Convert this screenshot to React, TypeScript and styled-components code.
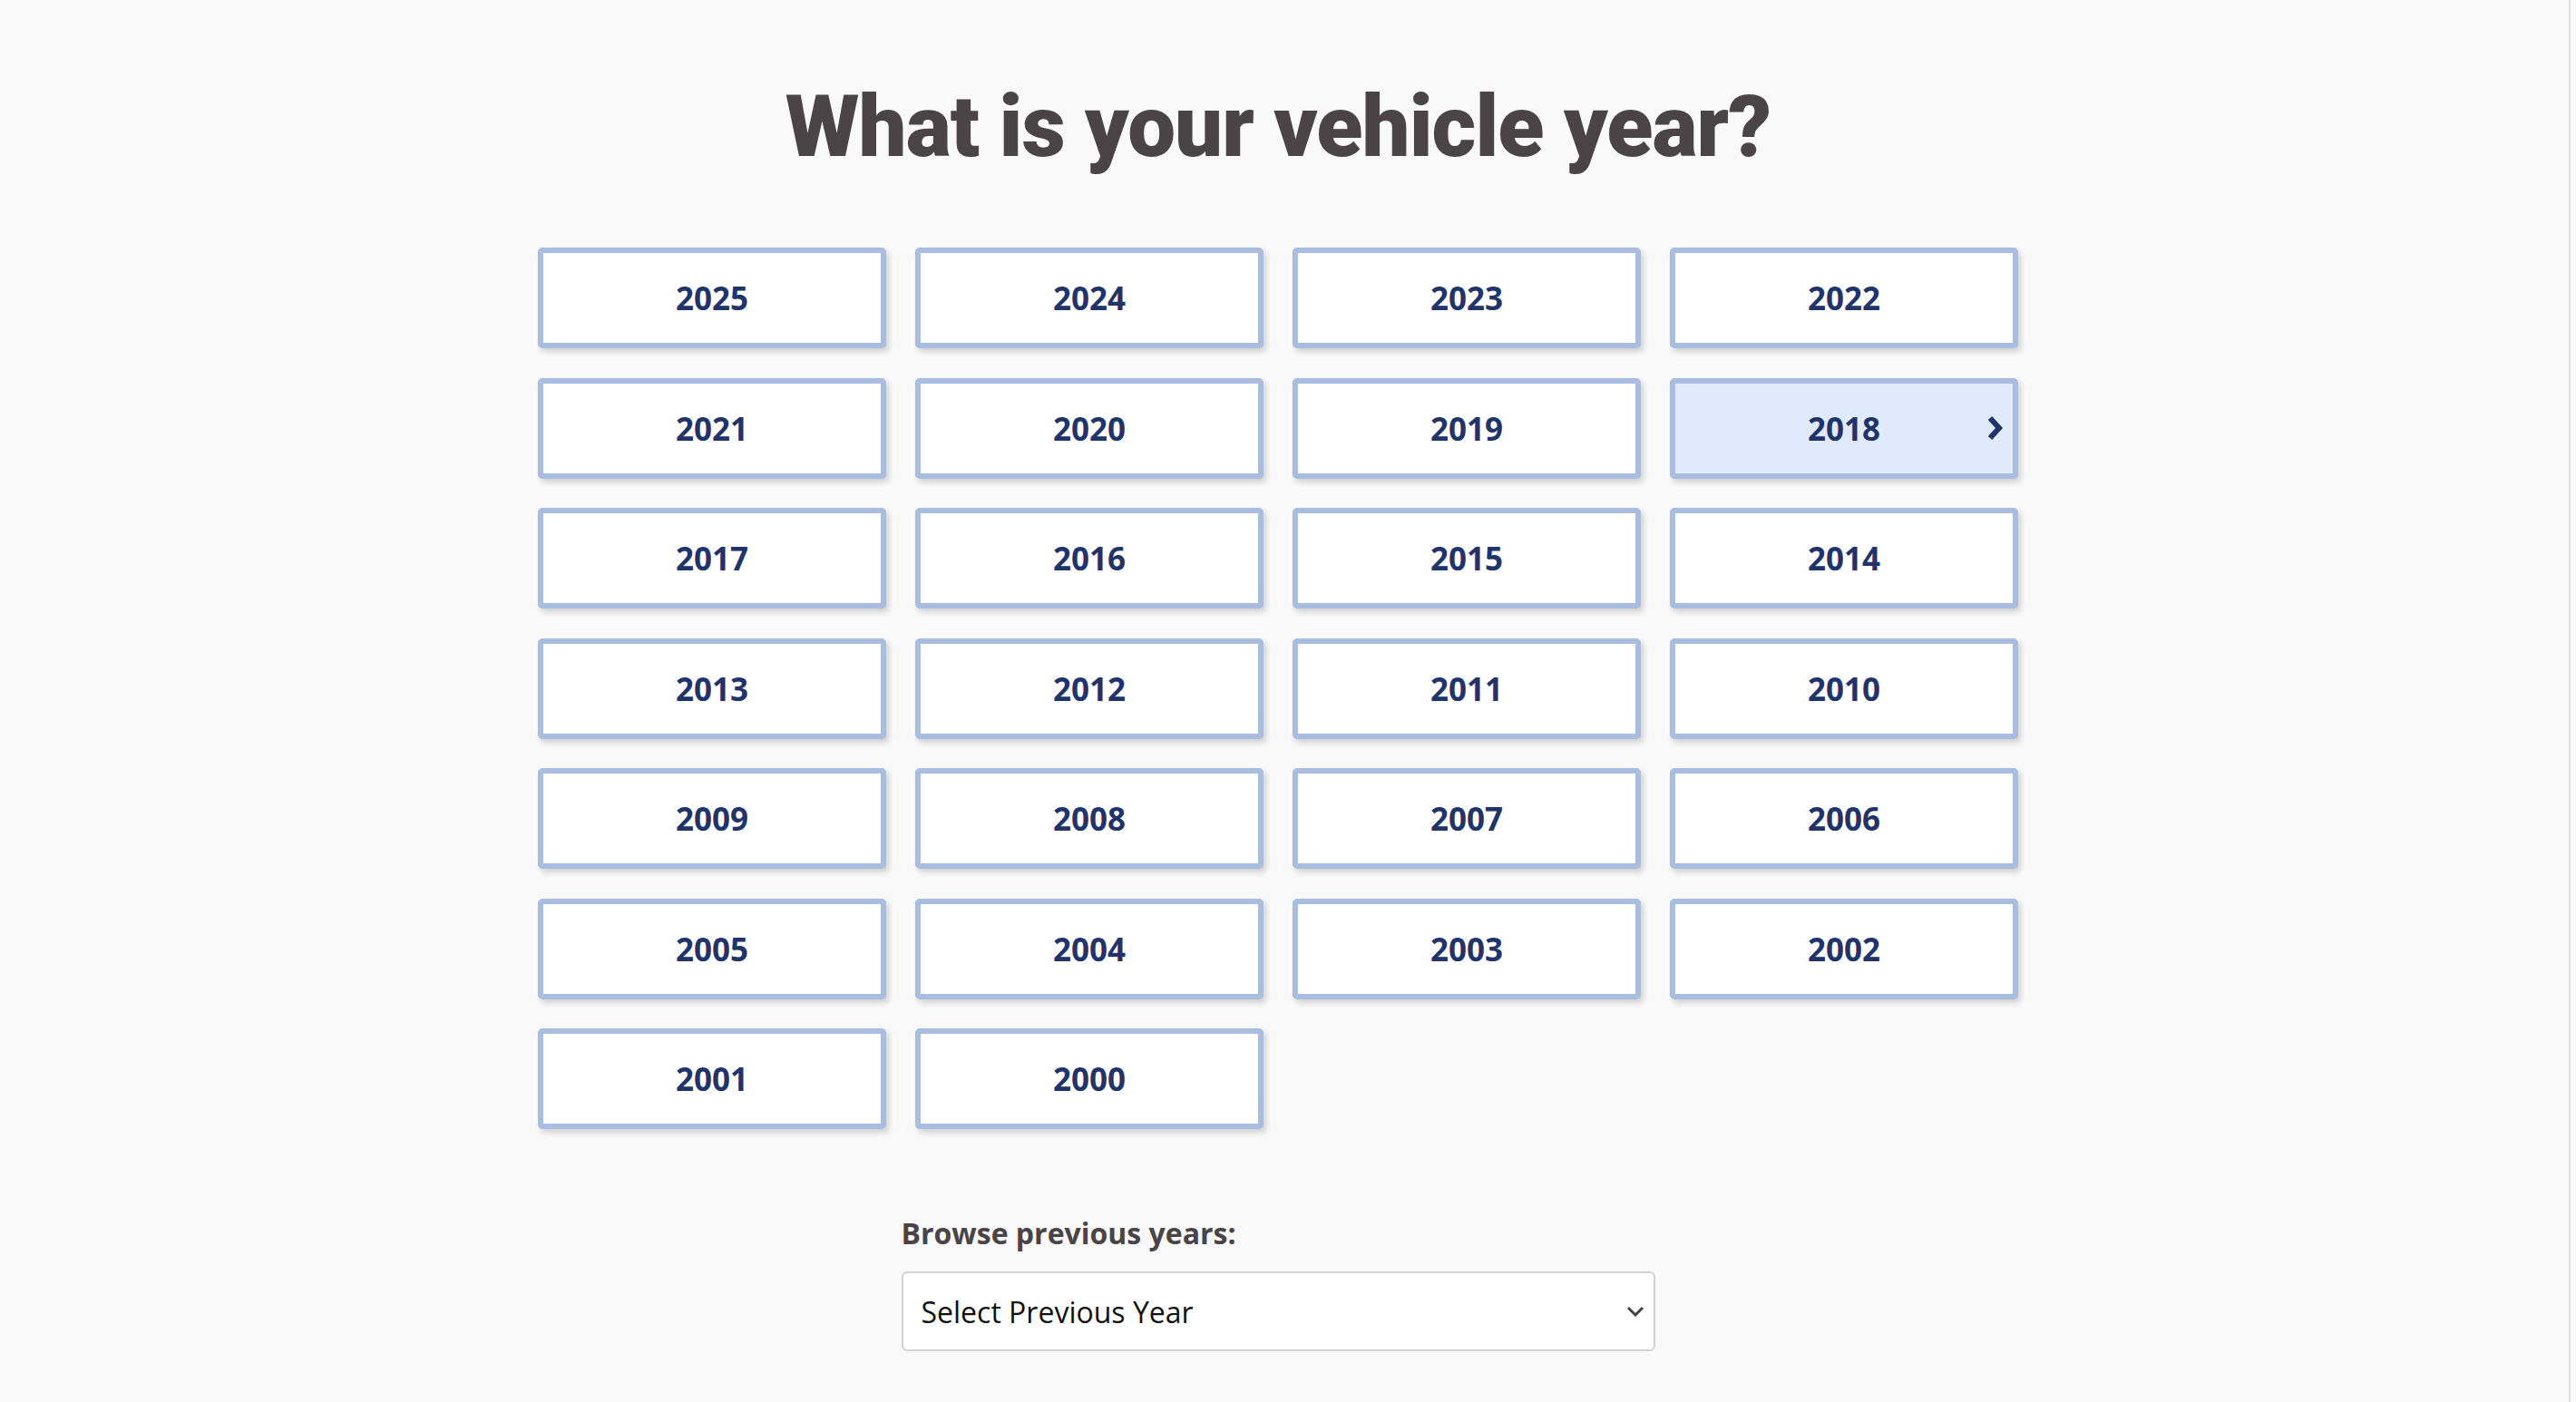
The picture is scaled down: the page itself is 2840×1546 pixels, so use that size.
import React from "react";
import styled, { createGlobalStyle } from "styled-components";

const GlobalStyle = createGlobalStyle`
  html, body {
    margin: 0;
    padding: 0;
    background: #f9f9f9;
  }
  * {
    box-sizing: border-box;
  }
`;

const Page = styled.div`
  display: flex;
  min-height: 100vh;
  background: #f9f9f9;
`;

const Main = styled.main`
  flex: 1;
  display: flex;
  flex-direction: column;
  align-items: center;
  padding: 93px 14px 40px 0;
`;

const Rail = styled.div`
  width: 8px;
  border-left: 2px solid #e1e1e1;
  background: #fcfcfc;
`;

const Title = styled.h1`
  margin: 0;
  font-family: Roboto, "Liberation Sans", sans-serif;
  font-weight: 900;
  font-size: 94px;
  line-height: 1;
  color: #4a4446;
  letter-spacing: -0.95px;
`;

const YearGrid = styled.div`
  margin-top: 86px;
  display: grid;
  grid-template-columns: repeat(4, 384px);
  grid-auto-rows: 111px;
  column-gap: 32px;
  row-gap: 32.5px;
`;

const YearButton = styled.button<{ $active?: boolean }>`
  position: relative;
  display: flex;
  align-items: center;
  justify-content: center;
  padding: 0;
  border: 6px solid #a8bde0;
  border-radius: 5px;
  background: ${(p) => (p.$active ? "#dfebfd" : "#ffffff")};
  box-shadow: 3px 4px 6px rgba(0, 0, 0, 0.16);
  font-family: "Open Sans", "Noto Sans", sans-serif;
  font-weight: 700;
  font-size: 35px;
  color: #20346a;
  cursor: pointer;
`;

const Chevron = styled.svg`
  position: absolute;
  right: 10px;
  top: 50%;
  transform: translateY(-50%);
  width: 18px;
  height: 28px;
`;

const Browse = styled.section`
  margin-top: 96px;
  width: 831px;
  display: flex;
  flex-direction: column;
  gap: 23px;
`;

const BrowseLabel = styled.label`
  font-family: "Open Sans", "Noto Sans", sans-serif;
  font-weight: 700;
  font-size: 32px;
  line-height: 1.2;
  color: #4a4446;
`;

const SelectWrap = styled.div`
  position: relative;
  height: 88px;
`;

const Select = styled.select`
  appearance: none;
  -webkit-appearance: none;
  width: 100%;
  height: 100%;
  padding: 0 60px 0 20px;
  border: 2px solid #d2d2d2;
  border-radius: 6px;
  background: #ffffff;
  font-family: "Open Sans", "Noto Sans", sans-serif;
  font-size: 32px;
  color: #111111;
  outline: none;
`;

const SelectArrow = styled.svg`
  position: absolute;
  right: 12px;
  top: 50%;
  transform: translateY(-50%);
  width: 20px;
  height: 12px;
  pointer-events: none;
`;

const years = Array.from({ length: 26 }, (_, i) => 2025 - i);

export default function App() {
  return (
    <>
      <GlobalStyle />
      <Page>
        <Main>
          <Title>What is your vehicle year?</Title>
          <YearGrid>
            {years.map((y) => (
              <YearButton key={y} type="button" $active={y === 2018}>
                {y}
                {y === 2018 && (
                  <Chevron viewBox="0 0 18 28">
                    <polyline
                      points="3,3 13,14 3,25"
                      fill="none"
                      stroke="#20346a"
                      strokeWidth="6"
                      strokeLinejoin="miter"
                    />
                  </Chevron>
                )}
              </YearButton>
            ))}
          </YearGrid>
          <Browse>
            <BrowseLabel htmlFor="previous-year">Browse previous years:</BrowseLabel>
            <SelectWrap>
              <Select id="previous-year" defaultValue="">
                <option value="">Select Previous Year</option>
                {Array.from({ length: 20 }, (_, i) => 1999 - i).map((y) => (
                  <option key={y} value={y}>
                    {y}
                  </option>
                ))}
              </Select>
              <SelectArrow viewBox="0 0 20 12">
                <polyline
                  points="2,2 10,10 18,2"
                  fill="none"
                  stroke="#444444"
                  strokeWidth="3"
                />
              </SelectArrow>
            </SelectWrap>
          </Browse>
        </Main>
        <Rail />
      </Page>
    </>
  );
}
